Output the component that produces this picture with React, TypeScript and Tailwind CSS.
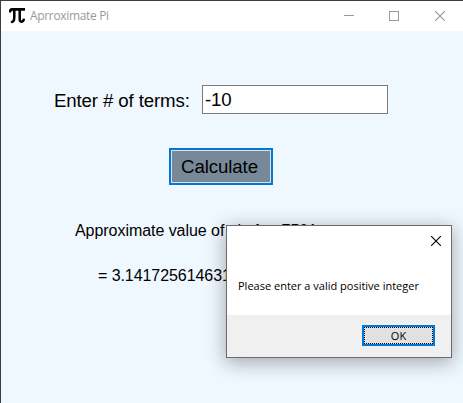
import React from "react";

const arial = "font-['Liberation_Sans',Arial,sans-serif]";
const segoe = "font-['Open_Sans','Noto_Sans',sans-serif]";

function PiIcon() {
  return (
    <svg width="16" height="16" viewBox="0 0 16 16" fill="none" stroke="#000">
      <path d="M0.6 4.4C1 2.2 2 1.3 3.5 1.3H16" strokeWidth="2.7" />
      <path d="M5.3 2V9C5.3 12 4.6 13.7 2.9 13.9" strokeWidth="2.5" strokeLinecap="round" />
      <path d="M10.7 2V11.5C10.7 14.6 14.4 14.8 15 10.6" strokeWidth="2.5" />
    </svg>
  );
}

function Cross({ color }: { color: string }) {
  return (
    <svg width="10" height="10" viewBox="0 0 10 10" stroke={color} strokeWidth="1.1">
      <path d="M0 0L10 10M10 0L0 10" />
    </svg>
  );
}

function TitleBar() {
  return (
    <header className="flex h-[30px] items-center bg-white pl-2 pr-[18px]">
      <PiIcon />
      <h1 className={`${segoe} ml-[5px] text-[12px] leading-4 tracking-[-0.33px] text-[#999999]`}>
        Aprroximate Pi
      </h1>
      <div className="ml-auto flex items-center">
        <svg width="10" height="10" viewBox="0 0 10 10" stroke="#999">
          <path d="M0 4.5H10" />
        </svg>
        <svg className="ml-[35px]" width="10" height="10" viewBox="0 0 10 10" fill="none" stroke="#999">
          <rect x="0.5" y="0.5" width="9" height="9" />
        </svg>
        <span className="ml-9">
          <Cross color="#999" />
        </span>
      </div>
    </header>
  );
}

function MessageBox() {
  return (
    <section
      role="dialog"
      className={`${segoe} absolute left-[225px] top-[224px] flex h-[133px] w-[226px] flex-col border border-[#696b6e] bg-white text-black shadow-[0_4px_18px_1px_rgba(0,0,0,0.32)]`}
    >
      <div className="flex h-[29px] items-center justify-end pr-[10px]">
        <Cross color="#000" />
      </div>
      <p className="mt-[23px] whitespace-nowrap pl-[11px] text-[11px] leading-4">
        Please enter a valid positive integer
      </p>
      <footer className="mt-auto flex h-[42px] justify-end bg-[#f0f0f0] pr-4 pt-[10px]">
        <button className="h-[21px] w-[73px] border-2 border-[#0078d7] bg-[#e1e1e1] text-[11px]">
          <span className="flex h-full items-center justify-center border border-dotted border-black leading-none">
            OK
          </span>
        </button>
      </footer>
    </section>
  );
}

export default function App() {
  return (
    <div className="relative flex h-[403px] w-[463px] flex-col overflow-hidden border-l border-t border-[#3f3b40] bg-[#f0f8ff]">
      <TitleBar />
      <main className={`${arial} flex flex-col text-black`}>
        <div className="mt-[54px] flex items-center pl-[53px]">
          <label className="w-[148px] whitespace-nowrap pt-0.5 text-[18.67px] leading-[27px] tracking-[-0.13px]">
            Enter # of terms:
          </label>
          <input
            className="h-[29px] w-[186px] border border-[#7a7a7a] bg-white pl-[2px] text-[18.67px] tracking-[-0.2px]"
            defaultValue="-10"
          />
        </div>
        <button className="ml-[168px] mt-[34px] h-[37px] w-[104px] border-2 border-[#0078d7] bg-[#778899] text-[18.67px] tracking-[-0.1px]">
          <span className="flex h-full items-center justify-center border border-[#e1e1e1] pr-[3px]">Calculate</span>
        </button>
        <p className="mt-[36px] whitespace-nowrap pl-[74px] text-[16px] leading-5 tracking-[-0.05px]">
          Approximate value of pi after 7501 terms
        </p>
        <p className="mt-[25px] whitespace-nowrap pl-[97px] text-[16px] leading-5 tracking-[-0.07px]">
          = 3.1417256146317
        </p>
      </main>
      <MessageBox />
    </div>
  );
}
